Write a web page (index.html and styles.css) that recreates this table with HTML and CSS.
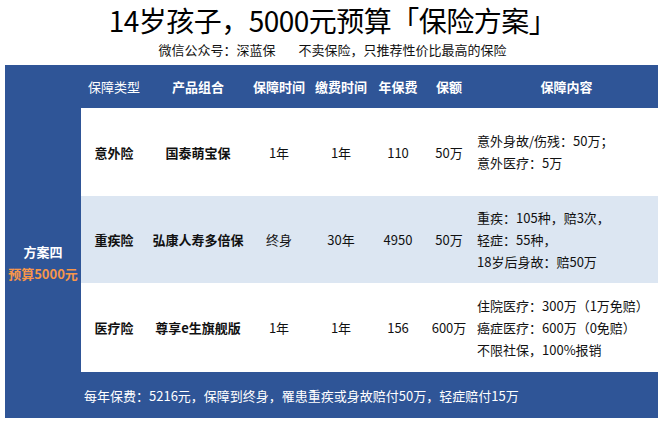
FILE: index.html
```html
<!DOCTYPE html>
<html lang="zh-CN">
<head>
<meta charset="utf-8">
<link rel="stylesheet" href="styles.css">
</head>
<body>
<header class="top">
  <h1 class="title">14岁孩子，5000元预算「保险方案」</h1>
  <p class="subtitle"><span>微信公众号：深蓝保</span><span class="slogan">不卖保险，只推荐性价比最高的保险</span></p>
</header>
<section class="panel">
  <div class="head">
    <div class="hc light">保障类型</div>
    <div class="hc">产品组合</div>
    <div class="hc">保障时间</div>
    <div class="hc">缴费时间</div>
    <div class="hc">年保费</div>
    <div class="hc">保额</div>
    <div class="hc">保障内容</div>
  </div>
  <div class="side">
    <div class="plan">方案四</div>
    <div class="budget">预算5000元</div>
  </div>
  <div class="row r1">
    <div class="c b">意外险</div>
    <div class="c b">国泰萌宝保</div>
    <div class="c">1年</div>
    <div class="c">1年</div>
    <div class="c">110</div>
    <div class="c">50万</div>
    <div class="c txt"><div>意外身故/伤残：50万；</div><div>意外医疗：5万</div></div>
  </div>
  <div class="row r2 alt">
    <div class="c b">重疾险</div>
    <div class="c b">弘康人寿多倍保</div>
    <div class="c">终身</div>
    <div class="c">30年</div>
    <div class="c">4950</div>
    <div class="c">50万</div>
    <div class="c txt"><div>重疾：105种，赔3次，</div><div>轻症：55种，</div><div>18岁后身故：赔50万</div></div>
  </div>
  <div class="row r3">
    <div class="c b">医疗险</div>
    <div class="c b">尊享e生旗舰版</div>
    <div class="c">1年</div>
    <div class="c">1年</div>
    <div class="c">156</div>
    <div class="c">600万</div>
    <div class="c txt"><div>住院医疗：300万（1万免赔）</div><div>癌症医疗：600万（0免赔）</div><div>不限社保，100%报销</div></div>
  </div>
  <div class="foot">每年保费：5216元，保障到终身，罹患重疾或身故赔付50万，轻症赔付15万</div>
</section>
</body>
</html>
```

FILE: styles.css
```css
* { box-sizing: border-box; }
html, body { margin: 0; padding: 0; background: #fff; }
body {
  width: 665px;
  height: 435px;
  overflow: hidden;
  font-family: "Noto Sans CJK SC", "Noto Sans", sans-serif;
  color: #111;
}
.top {
  height: 65px;
  padding-top: 2px;
  text-align: center;
}
.title {
  margin: 0;
  font-size: 28px;
  line-height: 36px;
  font-weight: 400;
  color: #000;
  letter-spacing: -0.5px;
}
.subtitle {
  margin: 2px 0 0;
  font-size: 13px;
  line-height: 20px;
  color: #111;
}
.slogan { margin-left: 23px; }

.panel {
  margin-left: 5px;
  width: 653px;
  height: 353px;
  background: #2f5597;
  display: grid;
  grid-template-columns: 76px 1fr;
  grid-template-rows: 43px 88px 87px 89px 46px;
}
.head, .row {
  grid-column: 2;
  display: grid;
  grid-template-columns: 66px 102px 60px 64px 50px 52px 1fr;
  align-items: center;
}
.head { grid-row: 1; color: #fff; font-weight: 700; font-size: 13px; }
.hc { text-align: center; }
.hc.light { font-weight: 400; }

.side {
  grid-column: 1;
  grid-row: 2 / 6;
  display: flex;
  flex-direction: column;
  justify-content: center;
  align-items: center;
  font-size: 13px;
  font-weight: 700;
  line-height: 22px;
}
.plan { color: #fff; }
.budget { color: #f7964a; }

.row { background: #fff; font-size: 13px; color: #111; }
.row.alt { background: #dce6f2; }
.r1 { grid-row: 2; }
.r2 { grid-row: 3; }
.r3 { grid-row: 4; }
.c { text-align: center; }
.c.b { font-weight: 700; }
.c.txt { text-align: left; padding-left: 2px; line-height: 22px; }

.foot {
  grid-column: 2;
  grid-row: 5;
  color: #fff;
  font-size: 13px;
  padding-left: 3px;
  display: flex;
  align-items: center;
}
```
